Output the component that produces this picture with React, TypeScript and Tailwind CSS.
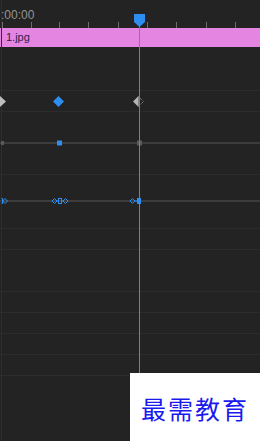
import React from "react";

const ticks = [2, 31, 59, 88, 118, 147, 176, 206, 235];

function Row({ h, children }: { h: string; children?: React.ReactNode }) {
  return <div className={`relative border-b border-[#2c2c2c] ${h}`}>{children}</div>;
}

export default function App() {
  return (
    <div
      className="relative w-[260px] h-[441px] overflow-hidden bg-[#232323] flex flex-col"
      style={{ fontFamily: '"Liberation Sans", Arial, sans-serif' }}
    >
      {/* left edge line */}
      <div className="absolute left-[1px] top-0 bottom-0 w-px bg-[#2e2e2e]" />

      {/* ruler */}
      <div className="relative h-[28px] shrink-0">
        <div className="pl-[1px] pt-[8px] text-[12px] leading-[14px] text-[#939393]">:00:00</div>
        <svg className="absolute inset-0" width="260" height="28">
          {ticks.map((x) => (
            <rect key={x} x={x} y={22} width={1} height={6} fill="#6e6e6e" />
          ))}
        </svg>
      </div>

      {/* clip bar */}
      <div className="h-[19px] shrink-0 bg-[#e485e1] pl-[6px] text-[11px] leading-[19px] text-[#2a1f55]">1.jpg</div>

      <Row h="h-[44px] shrink-0" />
      <Row h="h-[21px] shrink-0">
        <svg className="absolute left-0 top-0" width="260" height="21">
          <polygon points="0,5 6,10.5 0,16" fill="#bdbdbd" />
          <polygon points="58.5,5 64,10.5 58.5,16 53,10.5" fill="#2e8ef0" />
          <polygon points="138.5,5 138.5,16 133,10.5" fill="#b4b4b4" />
          <polygon points="138.5,5.5 143.5,10.5 138.5,15.5" fill="none" stroke="#9a9a9a" strokeWidth="1" strokeDasharray="1 1" />
        </svg>
      </Row>
      <Row h="h-[63px] shrink-0">
        <div className="absolute left-0 right-0 top-[30px] h-[2px] bg-[#3c3c3c]" />
        <svg className="absolute left-0 top-0" width="260" height="63">
          <rect x="1" y="29" width="3" height="4" fill="#5a5a5a" />
          <rect x="57" y="28.5" width="5" height="5" fill="#2e8ef0" />
          <rect x="137" y="28.5" width="5" height="5" fill="#5a5a5a" />
        </svg>
      </Row>
      <Row h="h-[54px] shrink-0">
        <div className="absolute left-0 right-0 top-[25px] h-[2px] bg-[#3c3c3c]" />
        <svg className="absolute left-0 top-0" width="260" height="54" fill="none" stroke="#2e8ef0" strokeWidth="1">
          <path d="M1.5 23.5 H2.5 V28.5 H1.5" />
          <path d="M2.5 26 H4" />
          <polygon points="5,23.5 7.5,26 5,28.5 2.5,26" />
          <polygon points="54.5,23.5 57,26 54.5,28.5 52,26" />
          <path d="M57 26 H58" />
          <rect x="58.5" y="23.5" width="3" height="5" />
          <path d="M62 26 H63" />
          <polygon points="65.5,23.5 68,26 65.5,28.5 63,26" />
          <polygon points="132.5,23.5 135,26 132.5,28.5 130,26" />
          <path d="M135 26 H137" />
          <rect x="137" y="23" width="4" height="6" fill="#2e8ef0" stroke="none" />
        </svg>
      </Row>
      <Row h="h-[21px] shrink-0" />
      <Row h="h-[42px] shrink-0" />
      <Row h="h-[21px] shrink-0" />
      <Row h="h-[21px] shrink-0" />
      <Row h="h-[21px] shrink-0" />
      <Row h="h-[21px] shrink-0" />

      {/* playhead */}
      <div className="absolute left-[139px] top-[26px] h-[348px] w-px bg-[#3a8fe6]" />
      <svg className="absolute left-[134px] top-[14px]" width="11" height="13">
        <polygon points="0,0 11,0 11,8 5.5,13 0,8" fill="#2e8ef0" />
      </svg>

      {/* watermark */}
      <div className="absolute left-[130px] top-[373px] flex h-[68px] w-[130px] items-center justify-center bg-white pt-[2px]">
        <span
          className="text-[25px] leading-none tracking-[2px] text-[#1a1aef]"
          style={{ fontFamily: '"Noto Sans CJK SC", sans-serif' }}
        >
          最需教育
        </span>
      </div>
    </div>
  );
}
